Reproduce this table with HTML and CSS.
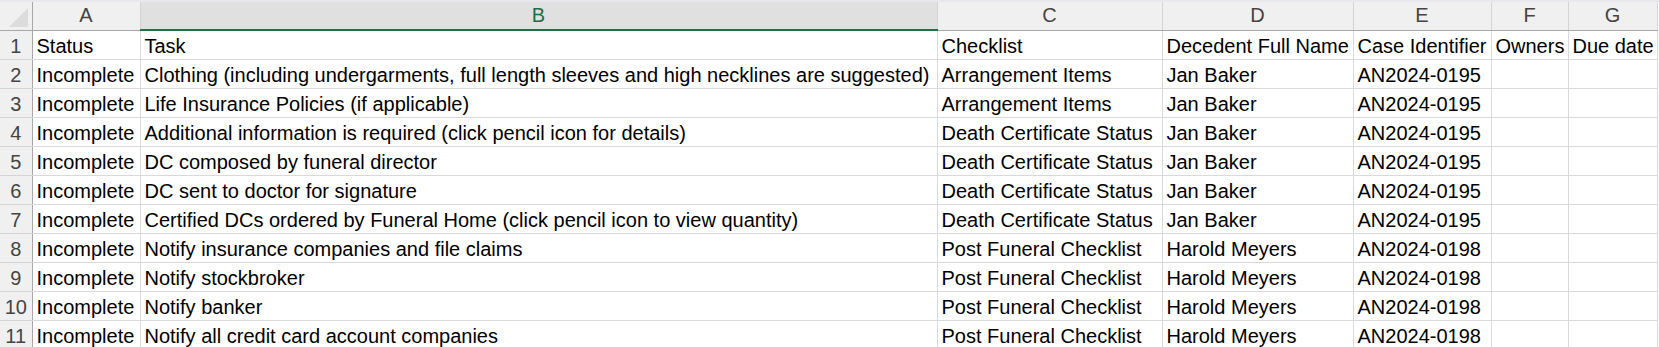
FILE: index.html
```html
<!DOCTYPE html>
<html lang="en">
  <head>
    <meta charset="UTF-8" />
    <meta name="viewport" content="width=device-width, initial-scale=1.0" />
    <link rel="stylesheet" href="styles.css">
    <title>Tasks</title>
  </head>
  <body>
    <div class="top-band"></div>
    <table class="sheet">
      <colgroup>
        <col class="w-row" />
        <col class="w-a" />
        <col class="w-b" />
        <col class="w-c" />
        <col class="w-d" />
        <col class="w-e" />
        <col class="w-f" />
        <col class="w-g" />
      </colgroup>
      <thead>
        <tr class="col-heads">
          <th class="corner"><span class="corner-tri"></span></th>
          <th>A</th>
          <th class="selected">B</th>
          <th>C</th>
          <th>D</th>
          <th>E</th>
          <th>F</th>
          <th>G</th>
        </tr>
      </thead>
      <tbody>
        <tr>
          <th class="row-head">1</th>
          <td>Status</td>
          <td>Task</td>
          <td>Checklist</td>
          <td>Decedent Full Name</td>
          <td>Case Identifier</td>
          <td>Owners</td>
          <td>Due date</td>
        </tr>
        <tr>
          <th class="row-head">2</th>
          <td>Incomplete</td>
          <td>Clothing (including undergarments, full length sleeves and high necklines are suggested)</td>
          <td>Arrangement Items</td>
          <td>Jan Baker</td>
          <td>AN2024-0195</td>
          <td></td>
          <td></td>
        </tr>
        <tr>
          <th class="row-head">3</th>
          <td>Incomplete</td>
          <td>Life Insurance Policies (if applicable)</td>
          <td>Arrangement Items</td>
          <td>Jan Baker</td>
          <td>AN2024-0195</td>
          <td></td>
          <td></td>
        </tr>
        <tr>
          <th class="row-head">4</th>
          <td>Incomplete</td>
          <td>Additional information is required (click pencil icon for details)</td>
          <td>Death Certificate Status</td>
          <td>Jan Baker</td>
          <td>AN2024-0195</td>
          <td></td>
          <td></td>
        </tr>
        <tr>
          <th class="row-head">5</th>
          <td>Incomplete</td>
          <td>DC composed by funeral director</td>
          <td>Death Certificate Status</td>
          <td>Jan Baker</td>
          <td>AN2024-0195</td>
          <td></td>
          <td></td>
        </tr>
        <tr>
          <th class="row-head">6</th>
          <td>Incomplete</td>
          <td>DC sent to doctor for signature</td>
          <td>Death Certificate Status</td>
          <td>Jan Baker</td>
          <td>AN2024-0195</td>
          <td></td>
          <td></td>
        </tr>
        <tr>
          <th class="row-head">7</th>
          <td>Incomplete</td>
          <td>Certified DCs ordered by Funeral Home (click pencil icon to view quantity)</td>
          <td>Death Certificate Status</td>
          <td>Jan Baker</td>
          <td>AN2024-0195</td>
          <td></td>
          <td></td>
        </tr>
        <tr>
          <th class="row-head">8</th>
          <td>Incomplete</td>
          <td>Notify insurance companies and file claims</td>
          <td>Post Funeral Checklist</td>
          <td>Harold Meyers</td>
          <td>AN2024-0198</td>
          <td></td>
          <td></td>
        </tr>
        <tr>
          <th class="row-head">9</th>
          <td>Incomplete</td>
          <td>Notify stockbroker</td>
          <td>Post Funeral Checklist</td>
          <td>Harold Meyers</td>
          <td>AN2024-0198</td>
          <td></td>
          <td></td>
        </tr>
        <tr>
          <th class="row-head">10</th>
          <td>Incomplete</td>
          <td>Notify banker</td>
          <td>Post Funeral Checklist</td>
          <td>Harold Meyers</td>
          <td>AN2024-0198</td>
          <td></td>
          <td></td>
        </tr>
        <tr>
          <th class="row-head">11</th>
          <td>Incomplete</td>
          <td>Notify all credit card account companies</td>
          <td>Post Funeral Checklist</td>
          <td>Harold Meyers</td>
          <td>AN2024-0198</td>
          <td></td>
          <td></td>
        </tr>
      </tbody>
    </table>
  </body>
</html>
```

FILE: styles.css
```css
html,
body {
  margin: 0;
  padding: 0;
  background-color: #ffffff;
  overflow: hidden;
}

body {
  font-family: "Liberation Sans", Arial, sans-serif;
  color: #000000;
}

.top-band {
  height: 2px;
  background-color: #e6e8eb;
}

.sheet {
  border-collapse: collapse;
  table-layout: fixed;
  width: 1657px;
}

.w-row { width: 32px; }
.w-a { width: 108px; }
.w-b { width: 797px; }
.w-c { width: 225px; }
.w-d { width: 191px; }
.w-e { width: 138px; }
.w-f { width: 77px; }
.w-g { width: 89px; }

/* column letters */
.col-heads th {
  height: 27px;
  padding: 0;
  background-color: #f0f0f0;
  border-right: 1px solid #d4d4d4;
  border-bottom: 1px solid #a8a8a8;
  font-size: 20px;
  font-weight: normal;
  color: #444444;
  text-align: center;
  vertical-align: middle;
}

.col-heads th.selected {
  background-color: #e0e0e0;
  color: #1e6e42;
  border-bottom: 2px solid #217346;
}

.col-heads th.corner {
  position: relative;
  border-right: 1px solid #a8a8a8;
}

.corner-tri {
  position: absolute;
  right: 4px;
  bottom: 3px;
  width: 0;
  height: 0;
  border-left: 19px solid transparent;
  border-bottom: 19px solid #dcdcdc;
}

/* row numbers */
.row-head {
  height: 28px;
  padding: 0;
  background-color: #f0f0f0;
  border-right: 1px solid #a8a8a8;
  border-bottom: 1px solid #d4d4d4;
  font-size: 20px;
  font-weight: normal;
  color: #444444;
  text-align: center;
  vertical-align: bottom;
  line-height: 26px;
}

td {
  height: 28px;
  padding: 0 0 0 4px;
  border-right: 1px solid #d9d9d9;
  border-bottom: 1px solid #d9d9d9;
  font-size: 20px;
  line-height: 26px;
  vertical-align: bottom;
  white-space: nowrap;
  overflow: hidden;
}
```
